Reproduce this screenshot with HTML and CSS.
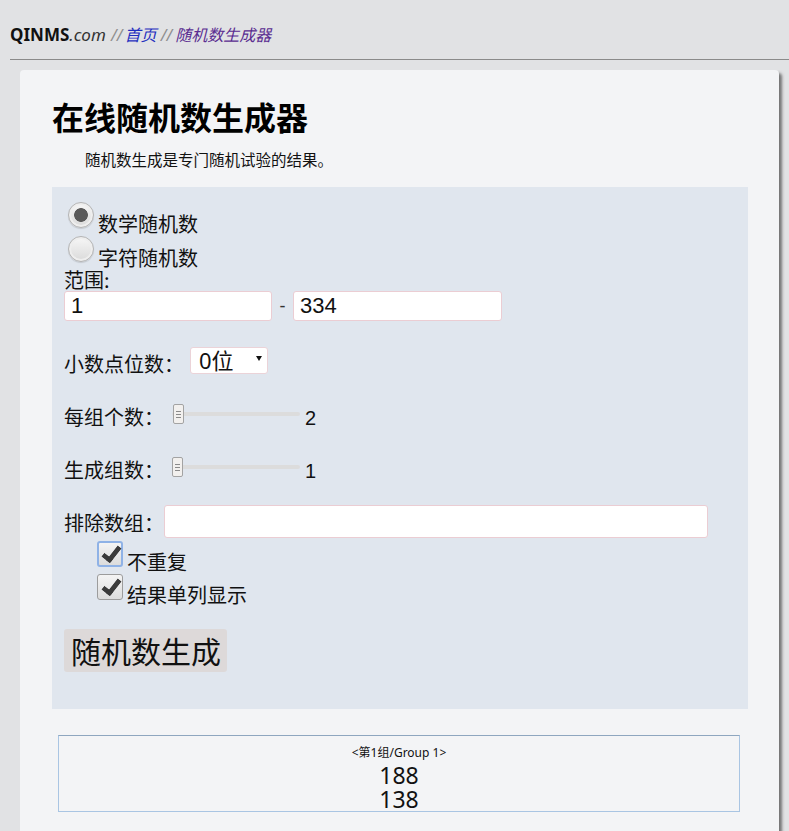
FILE: index.html
```html
<!DOCTYPE html>
<html lang="zh-CN">
<head>
<meta charset="utf-8">
<title>在线随机数生成器</title>
<link rel="stylesheet" href="styles.css">
</head>
<body>
<div class="topbar">
  <span class="brand">QINMS</span><span class="dotcom">.com</span>
  <span class="sep">//</span>
  <a class="crumb home" href="#">首页</a>
  <span class="sep sep2">//</span>
  <a class="crumb current" href="#">随机数生成器</a>
</div>
<div class="card">
  <h1 class="title">在线随机数生成器</h1>
  <p class="intro">随机数生成是专门随机试验的结果。</p>
  <form class="panel">
    <div class="radio-row"><input type="radio" name="kind" class="radio" checked><span class="rlabel">数学随机数</span></div>
    <div class="radio-row"><input type="radio" name="kind" class="radio"><span class="rlabel">字符随机数</span></div>
    <div class="lbl-line">范围:</div>
    <div class="range-row">
      <input type="text" class="field f-range" value="1">
      <span class="dash">-</span>
      <input type="text" class="field f-range" value="334">
    </div>
    <div class="row row-select">
      <span class="lbl">小数点位数：</span>
      <span class="sel-wrap"><select class="sel"><option>0位</option></select></span>
    </div>
    <div class="row row-slider1">
      <span class="lbl">每组个数：</span>
      <input type="range" class="slider" min="1" max="100" value="2"><span class="val">2</span>
    </div>
    <div class="row row-slider2">
      <span class="lbl">生成组数：</span>
      <input type="range" class="slider" min="1" max="100" value="1"><span class="val">1</span>
    </div>
    <div class="row row-exclude">
      <span class="lbl">排除数组：</span>
      <input type="text" class="field f-exclude" value="">
    </div>
    <div class="cb-row cb-first"><input type="checkbox" class="cb cb-focus" checked><span class="cblabel">不重复</span></div>
    <div class="cb-row"><input type="checkbox" class="cb" checked><span class="cblabel">结果单列显示</span></div>
    <button type="button" class="gen">随机数生成</button>
  </form>
  <div class="result">
    <div class="group">&lt;第1组/Group 1&gt;</div>
    <div class="num">188</div>
    <div class="num">138</div>
  </div>
</div>
</body>
</html>
```
FILE: styles.css
```css
html, body {
  margin: 0;
  padding: 0;
}
body {
  background: #e1e2e4;
  font-family: "Noto Sans", "Noto Sans CJK SC", sans-serif;
  color: #111;
  overflow: hidden;
}
.topbar {
  margin-left: 10px;
  height: 60px;
  box-sizing: border-box;
  padding-top: 24px;
  line-height: 20px;
  font-size: 16px;
  border-bottom: 1px solid #8a8a8a;
  white-space: nowrap;
}
.brand {
  font-weight: bold;
  font-size: 17px;
  color: #111;
}
.dotcom {
  font-style: italic;
  font-size: 17px;
  color: #333;
}
.sep {
  font-style: italic;
  color: #8f8f8f;
  margin: 0 -2px 0 1px;
}
.sep2 {
  margin: 0 -1px 0 0;
}
.crumb {
  font-style: italic;
  text-decoration: none;
  font-family: "Noto Sans CJK SC", sans-serif;
}
.home { color: #1f2fbf; }
.current { color: #5a2d91; }

.card {
  margin: 10px 0 0 20px;
  width: 759px;
  box-sizing: border-box;
  padding: 1px 31px 30px 32px;
  background: #f3f4f6;
  border-radius: 4px;
  box-shadow: 3px 3px 3px rgba(80, 80, 80, 0.75);
}
.title {
  margin: 25px 0 0;
  font-size: 32px;
  line-height: 40px;
  font-weight: bold;
  font-family: "Noto Sans CJK SC", sans-serif;
  color: #000;
}
.intro {
  margin: 13px 0 0 33px;
  font-size: 15.5px;
  line-height: 20px;
  font-family: "Noto Sans CJK SC", sans-serif;
  color: #111;
}
.panel {
  margin-top: 18px;
  background: #e0e6ee;
  padding: 15px 12px 37px 12px;
  font-family: "Noto Sans CJK SC", sans-serif;
  font-size: 20px;
  color: #111;
}
.radio-row {
  display: flex;
  align-items: flex-start;
  height: 34px;
  padding-left: 4px;
}
.radio-row + .radio-row { height: 33px; }
.radio {
  -webkit-appearance: none;
  appearance: none;
  margin: 0;
  width: 26px;
  height: 26px;
  border-radius: 50%;
  border: 1px solid #b4b4b4;
  box-sizing: border-box;
  background: linear-gradient(#f7f7f7, #dadada);
  box-shadow: inset 0 0 0 2px #eeeeee, 0 1px 1px rgba(0, 0, 0, 0.12);
}
.radio:checked {
  background: radial-gradient(circle, #5a5a5a 0 6.5px, transparent 7.2px), linear-gradient(#f7f7f7, #dadada);
}
.rlabel {
  margin-top: 10px;
  margin-left: 4px;
  line-height: 24px;
}
.lbl-line {
  height: 22px;
  line-height: 22px;
}
.range-row {
  display: flex;
  align-items: center;
  height: 30px;
}
.field {
  box-sizing: border-box;
  height: 30px;
  border: 1px solid #ebcdd3;
  border-radius: 3px;
  background: #fff;
  font-family: "Liberation Sans", Arial, sans-serif;
  font-size: 22px;
  padding: 0 6px;
  color: #111;
  margin: 0;
  outline: none;
}
.f-range { width: 208px; }
.f-range + .dash + .f-range { width: 209px; }
.dash {
  width: 21px;
  text-align: center;
  font-family: "Liberation Sans", Arial, sans-serif;
  font-size: 18px;
  color: #333;
}
.row {
  display: flex;
  align-items: center;
}
.lbl {
  line-height: 24px;
  white-space: nowrap;
}
.row-select {
  margin-top: 26px;
  height: 27px;
}
.row-select .lbl { margin-top: 6px; }
.sel-wrap {
  position: relative;
  display: inline-block;
  margin-left: 6px;
}
.sel {
  -webkit-appearance: none;
  appearance: none;
  width: 78px;
  height: 27px;
  box-sizing: border-box;
  border: 1px solid #ebd3d8;
  border-radius: 3px;
  background: #fff;
  font-family: "Noto Sans", "Noto Sans CJK SC", sans-serif;
  font-size: 22px;
  line-height: 25px;
  padding: 0 0 0 8px;
  color: #111;
  margin: 0;
}
.sel-wrap::after {
  content: "";
  position: absolute;
  right: 6px;
  top: 10px;
  border-left: 3px solid transparent;
  border-right: 3px solid transparent;
  border-top: 5px solid #111;
}
.row-slider1 {
  margin-top: 28px;
  height: 24px;
}
.row-slider2 {
  margin-top: 29px;
  height: 24px;
}
.row-slider1 .lbl, .row-slider2 .lbl { margin-top: 6px; }
.slider {
  -webkit-appearance: none;
  appearance: none;
  width: 128px;
  height: 22px;
  margin: 0 5px 0 8px;
  background: transparent;
  padding: 0;
}
.slider::-webkit-slider-runnable-track {
  height: 4px;
  background: #dcdcdc;
  border-radius: 2px;
  box-shadow: -6px 0 4px -2px rgba(210, 210, 210, 0.8);
}
.slider::-webkit-slider-thumb {
  -webkit-appearance: none;
  width: 11px;
  height: 20px;
  margin-top: -8px;
  box-sizing: border-box;
  border: 1px solid #a3a3a3;
  border-radius: 2px;
  background-color: #f2f0ee;
  background-image: repeating-linear-gradient(#8a8a8a 0 1px, transparent 1px 3px);
  background-size: 5px 7px;
  background-position: center;
  background-repeat: no-repeat;
}
.val {
  font-family: "Liberation Sans", Arial, sans-serif;
  font-size: 20px;
  margin-top: 8px;
}
.row-exclude {
  margin-top: 26px;
  height: 33px;
}
.row-exclude .lbl { margin-top: 3px; }
.f-exclude {
  width: 544px;
  height: 33px;
}
.cb-row {
  display: flex;
  align-items: flex-start;
  margin-left: 33px;
  height: 26px;
  margin-top: 7px;
}
.cb-first { margin-top: 3px; }
.cb {
  -webkit-appearance: none;
  appearance: none;
  position: relative;
  margin: 0;
  width: 26px;
  height: 26px;
  box-sizing: border-box;
  border: 1px solid #9c9c9c;
  border-radius: 3px;
  background: linear-gradient(#f4f4f4, #dcdcdc);
}
.cb-focus {
  border: 2px solid #8fb2e6;
}
.cb:checked::after {
  content: "";
  position: absolute;
  left: 8px;
  top: 1px;
  width: 6px;
  height: 14px;
  border-right: 5px solid #3a3a3a;
  border-bottom: 5px solid #3a3a3a;
  border-bottom-right-radius: 2px;
  transform: rotate(38deg);
}
.cb-focus:checked::after {
  left: 7px;
  top: 0;
}
.cblabel {
  margin-top: 9px;
  margin-left: 4px;
  line-height: 24px;
}
.gen {
  display: block;
  margin: 29px 0 0;
  height: 43px;
  padding: 0 6px 0 7px;
  border: none;
  border-radius: 3px;
  background: #ddd9d9;
  font-family: "Noto Sans CJK SC", sans-serif;
  font-size: 30px;
  line-height: 43px;
  color: #111;
}
.result {
  margin: 26px 0 0 6px;
  width: 682px;
  box-sizing: border-box;
  border: 1px solid #a9c5e3;
  border-top-color: #8ea6bf;
  padding-top: 9px;
  text-align: center;
  font-family: "Noto Sans", "Noto Sans CJK SC", sans-serif;
  color: #111;
}
.group {
  font-size: 12px;
  line-height: 16px;
  margin-bottom: 2px;
}
.num {
  font-size: 23px;
  line-height: 24px;
}
```
